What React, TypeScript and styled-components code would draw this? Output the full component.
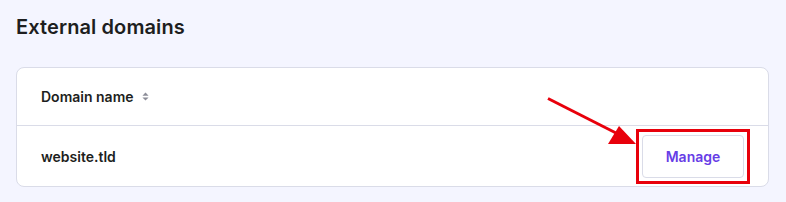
import styled, { createGlobalStyle } from "styled-components";

const GlobalStyle = createGlobalStyle`
    body {
        margin: 0;
        background: #f4f5ff;
        font-family: "Inter", "Noto Sans", sans-serif;
        color: #1d1e20;
    }
`;

const App = () => {
    return (
        <>
            <GlobalStyle />
            <Page>
                <Title>External domains</Title>
                <Card>
                    <HeaderRow>
                        <HeaderCell>
                            Domain name
                            <SortIcon viewBox="0 0 8 10">
                                <path d="M4 0.5 L7.5 4 H0.5 Z" />
                                <path d="M4 9.5 L7.5 6 H0.5 Z" />
                            </SortIcon>
                        </HeaderCell>
                    </HeaderRow>
                    <BodyRow>
                        <DomainText>website.tld</DomainText>
                        <ButtonWrap>
                            <ManageButton type="button">Manage</ManageButton>
                            <Highlight />
                        </ButtonWrap>
                    </BodyRow>
                    {/* annotation arrow, coords in page pixels */}
                    <Arrow viewBox="544 95 100 55">
                        <line x1="548" y1="98.5" x2="616" y2="133" stroke="#e8000b" strokeWidth="3" />
                        <path d="M619 126 L608 144 L636 144 Z" fill="#e8000b" />
                    </Arrow>
                </Card>
            </Page>
        </>
    );
};

const Page = styled.div`
    padding: 15px 17px 16px 16px;
`;

const Title = styled.h2`
    margin: 0 0 28px;
    font-size: 20px;
    line-height: 24px;
    font-weight: 600;
    letter-spacing: 0.1px;
    color: #1d1e20;
`;

const Card = styled.div`
    position: relative;
    background: #fff;
    border: 1px solid #dadce8;
    border-radius: 8px;
`;

const HeaderRow = styled.div`
    display: flex;
    align-items: center;
    height: 57px;
    padding: 0 24px;
    border-bottom: 1px solid #dadce8;
`;

const HeaderCell = styled.div`
    display: flex;
    align-items: center;
    gap: 8px;
    font-size: 14px;
    font-weight: 600;
    color: #1d1e20;
`;

const SortIcon = styled.svg`
    width: 7px;
    height: 9px;
    fill: #8c8d98;
`;

const BodyRow = styled.div`
    display: flex;
    align-items: center;
    justify-content: space-between;
    height: 60px;
    padding: 0 24px;
`;

const DomainText = styled.span`
    font-size: 14px;
    font-weight: 600;
    color: #1d1e20;
`;

const ButtonWrap = styled.div`
    position: relative;
    display: flex;
`;

const ManageButton = styled.button`
    width: 102px;
    height: 43px;
    background: #fff;
    border: 1px solid #dadce8;
    border-radius: 4px;
    font-family: "Inter", "Noto Sans", sans-serif;
    font-size: 14px;
    font-weight: 600;
    color: #673de6;
    cursor: pointer;
`;

const Highlight = styled.div`
    position: absolute;
    inset: -6px;
    border: 3px solid #e8000b;
`;

const Arrow = styled.svg`
    position: absolute;
    left: 527px;
    top: 27px;
    width: 100px;
    height: 55px;
    overflow: visible;
`;

export default App;
